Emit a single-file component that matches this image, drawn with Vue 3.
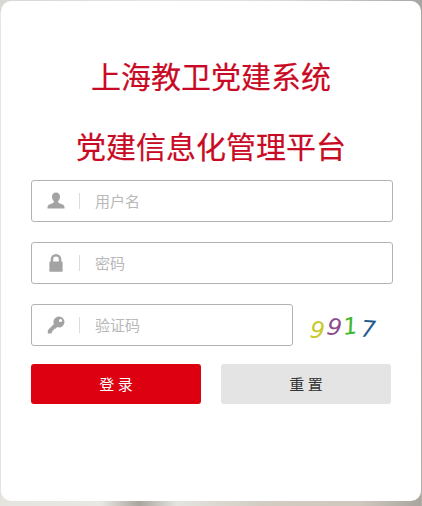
<script setup>
const codeDigits = [
  { ch: '9', cls: 'd1' },
  { ch: '9', cls: 'd2' },
  { ch: '1', cls: 'd3' },
  { ch: '7', cls: 'd4' },
]
</script>

<template>
  <div class="page">
    <div class="card">
      <h1 class="title">上海教卫党建系统</h1>
      <h1 class="title">党建信息化管理平台</h1>
      <form class="form" @submit.prevent>
        <div class="field">
          <span class="icon">
            <svg width="18" height="18" viewBox="0 0 18 18">
              <path fill="#a3a3a3" d="M9 0.500c2.600 0 4 1.900 4 4.300 0 1.800-.8 3.400-1.700 4.300-.4.500-.4 1.300.2 1.700 1.600 1 5.300 1.600 5.800 3.400.2.700.2 1.600.2 2.300H0.500c0-.7 0-1.600.2-2.300.5-1.800 4.200-2.400 5.800-3.400.6-.4.6-1.200.2-1.700C5.800 8.200 5 6.600 5 4.800 5 2.400 6.400.5 9 .5z"/>
            </svg>
          </span>
          <input class="input" type="text" placeholder="用户名" />
        </div>
        <div class="field">
          <span class="icon">
            <svg width="18" height="18" viewBox="0 0 18 18">
              <path fill="#a3a3a3" fill-rule="evenodd" d="M3.700 7.500V5.300a5.300 5.300 0 0 1 10.600 0v2.200h.3c.6 0 1 .4 1 1v8.200c0 .6-.4 1-1 1H3.400c-.6 0-1-.4-1-1V8.500c0-.6.4-1 1-1h.3zm2.500 0h5.600V5.300a2.800 2.800 0 0 0-5.600 0v2.200z"/>
            </svg>
          </span>
          <input class="input" type="text" placeholder="密码" />
        </div>
        <div class="row">
          <div class="field short">
            <span class="icon">
              <svg width="18" height="18" viewBox="0 0 18 18">
                <path fill="#a3a3a3" fill-rule="evenodd" d="M12 .6a5.400 5.400 0 1 1-1.700 10.500L8.600 12.800H6.900v1.700H5.200v1.700L4 17.400H.8v-3.200l6.100-6.100A5.400 5.400 0 0 1 12 .6zm1.500 2.300a1.600 1.600 0 1 0 0 3.200 1.600 1.600 0 0 0 0-3.200z"/>
              </svg>
            </span>
            <input class="input" type="text" placeholder="验证码" />
          </div>
          <div class="captcha">
            <span v-for="(d, i) in codeDigits" :key="i" class="digit" :class="d.cls">{{ d.ch }}</span>
          </div>
        </div>
        <div class="actions">
          <button class="btn primary" type="submit">登 录</button>
          <button class="btn ghost" type="reset">重 置</button>
        </div>
      </form>
    </div>
  </div>
</template>

<style scoped>
.page {
  width: 422px;
  height: 506px;
  box-sizing: border-box;
  padding: 1px 1px 5px 1px;
  overflow: hidden;
  background:
    linear-gradient(90deg, #d8d7d3 0%, #e6e6e4 40%, #dcdcda 65%, #b8b8b6 90%, #a6a6a4 100%) top / 100% 12px no-repeat,
    linear-gradient(180deg, #e6e6e4 0%, #e4e3df 100%) left / 1px 100% no-repeat,
    linear-gradient(180deg, #a6a6a4 0%, #b4b1ab 100%) right / 1px 100% no-repeat,
    linear-gradient(90deg, #e6e4df 0%, #e8e7e2 24%, #aaa69f 33%, #e5e4df 42%, #d2ccc3 62%, #cfc8bf 85%, #a8a49e 100%);
}
.card {
  height: 500px;
  box-sizing: border-box;
  padding-top: 39px;
  background: #fff;
  border-radius: 10px;
  font-family: "Noto Sans CJK SC", "Liberation Sans", sans-serif;
}
.title {
  margin: 0;
  height: 70px;
  line-height: 70px;
  font-size: 30px;
  font-weight: 400;
  text-align: center;
  color: #c90a25;
  -webkit-text-stroke: 0.2px #c90a25;
}
.form {
  display: flex;
  flex-direction: column;
  gap: 20px;
  padding: 0 28px 0 30px;
}
.field {
  display: flex;
  align-items: center;
  height: 42px;
  box-sizing: border-box;
  border: 1px solid #b3b3b3;
  border-radius: 3px;
  background: #fff;
}
.short { width: 262px; flex: none; }
.icon {
  position: relative;
  flex: none;
  width: 48px;
  height: 100%;
  display: flex;
  align-items: center;
  justify-content: center;
}
.icon::after {
  content: "";
  position: absolute;
  right: 0;
  top: 12px;
  height: 16px;
  width: 1px;
  background: #dcdcdc;
}
.input {
  flex: 1;
  min-width: 0;
  height: 100%;
  padding: 0 0 2px 15px;
  box-sizing: border-box;
  border: 0;
  outline: 0;
  background: transparent;
  font: 15px "Noto Sans CJK SC", sans-serif;
  color: #333;
}
.input::placeholder { color: #b8b8b8; opacity: 1; }
.row { display: flex; align-items: center; }
.captcha {
  display: flex;
  align-items: center;
  gap: 2px;
  padding-left: 17px;
  height: 42px;
  font-family: "DejaVu Sans", sans-serif;
  font-size: 23px;
  font-style: italic;
}
.digit { display: block; }
.d1 { color: #c9c92c; transform: translateY(5px) rotate(6deg); }
.d2 { color: #8b4a8f; transform: translateY(2px) rotate(8deg); }
.d3 { color: #3fb52a; transform: translateY(1px) rotate(-8deg); }
.d4 { color: #1f5a8c; transform: translate(1px, 4px) rotate(4deg); }
.actions {
  display: flex;
  gap: 20px;
  margin-top: -2px;
}
.btn {
  width: 170px;
  height: 40px;
  border: 0;
  border-radius: 3px;
  font: 15px "Noto Sans CJK SC", sans-serif;
  padding: 0 0 2px;
}
.primary { background: #dc0011; color: #fff; }
.ghost { background: #e4e4e4; color: #333; }
</style>
